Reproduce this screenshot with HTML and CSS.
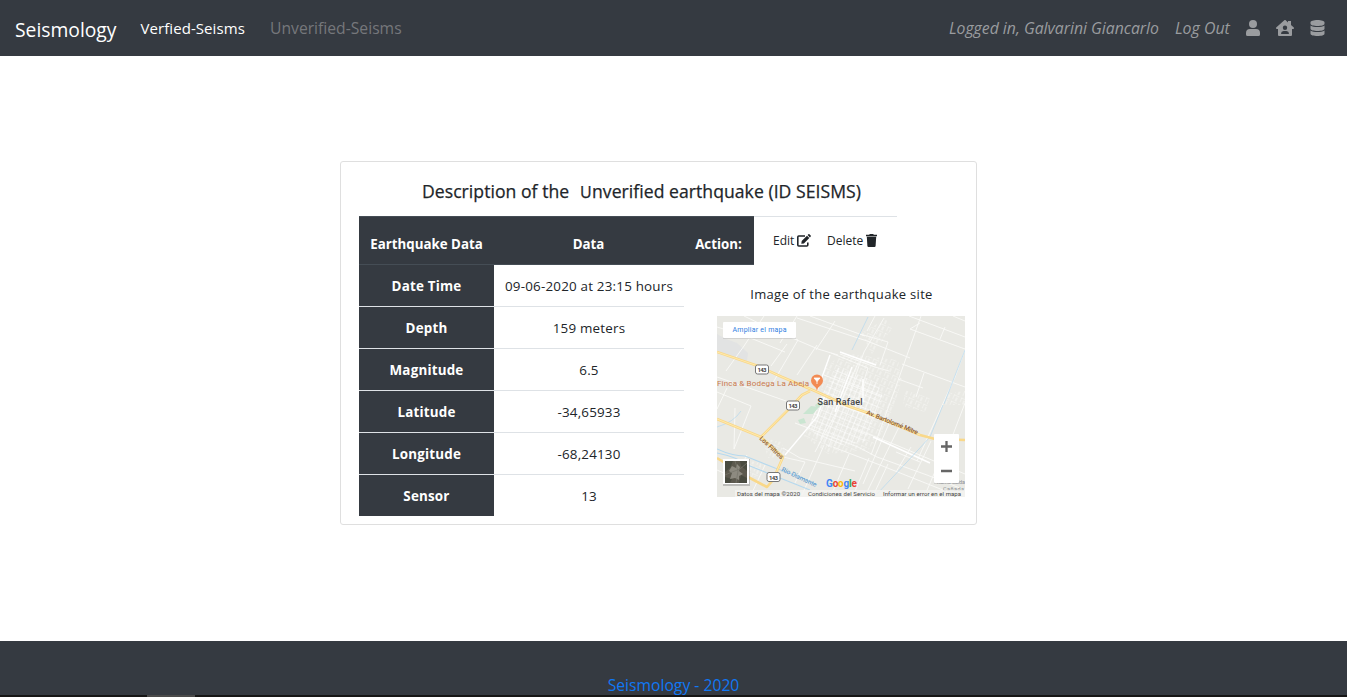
FILE: index.html
```html
<!DOCTYPE html>
<html lang="en">
<head>
<meta charset="utf-8">
<title>Seismology</title>
<link rel="stylesheet" href="styles.css">
</head>
<body>
<nav class="navbar">
  <a class="brand">Seismology</a>
  <a class="nav-link active">Verfied-Seisms</a>
  <a class="nav-link muted">Unverified-Seisms</a>
  <div class="session">
    <em class="user">Logged in, Galvarini Giancarlo</em>
    <em class="logout">Log Out</em>
    <svg class="icon-user" viewBox="0 0 14 16"><circle cx="7" cy="4" r="4"/><path d="M4 9h6a4 4 0 0 1 4 4v1.500a1.500 1.500 0 0 1-1.500 1.500h-11A1.500 1.500 0 0 1 0 14.500V13a4 4 0 0 1 4-4z"/></svg>
    <svg class="icon-house" viewBox="0 0 18 16"><path fill-rule="evenodd" d="M8.300.3a1 1 0 0 1 1.400 0L12 2.400V1h3v4.100l2.800 2.500c.5.500.1 1.400-.6 1.400H16v6a1 1 0 0 1-1 1H3a1 1 0 0 1-1-1V9H.8C.1 9-.3 8.100.2 7.600zM9 5.500a2.200 2.200 0 1 0 0 4.400 2.200 2.200 0 0 0 0-4.400zM7.600 11A2.600 2.600 0 0 0 5 13.500c0 .3.200.5.500.5h7c.3 0 .5-.2.5-.5a2.600 2.600 0 0 0-2.600-2.500z"/></svg>
    <svg class="icon-db" viewBox="0 0 14 16"><path d="M14 2.300v1.400C14 5 10.900 6 7 6S0 5 0 3.700V2.300C0 1 3.100 0 7 0s7 1 7 2.300zM14 5.500v3.200C14 10 10.900 11 7 11s-7-1-7-2.300V5.500C1.500 6.500 4.300 7 7 7s5.500-.5 7-1.500zm0 5v3.200C14 15 10.900 16 7 16s-7-1-7-2.300v-3.200C1.500 11.500 4.300 12 7 12s5.500-.5 7-1.500z"/></svg>
  </div>
</nav>
<main class="content">
  <section class="card">
    <h1 class="title"><span class="t1">Description of the</span><span class="t2">U</span><span class="t3">nverified earthquake (ID SEISMS)</span></h1>
    <div class="head-row">
      <div class="head-cells"><b class="h-name">Earthquake Data</b><b class="h-data">Data</b><b class="h-action">Action:</b></div>
      <div class="actions">
        <span class="edit">Edit</span>
        <svg class="icon-edit" viewBox="0 0 14 13"><path fill="none" stroke="#212529" stroke-width="1.600" d="M8 2H1.800Q.8 2 .8 3v8q0 1 1 1h8q1 0 1-1V8.500"/><path fill="#212529" d="M10 1.700 12.300 4 6.900 9.400 4.300 9.800 4.700 7.100zM10.600 1.100 11.400.3q.5-.5 1 0L13.700 1.600q.4.400 0 .9L12.900 3.400z"/></svg>
        <span class="delete">Delete</span>
        <svg class="icon-trash" viewBox="0 0 11 13"><path fill="#212529" d="M0 .8h3.200L3.800 0h3.400l.6.8H11v1.500H0zM.8 2.800h9.400l-.6 9.200q-.1 1-1.100 1h-6q-1 0-1.100-1z"/></svg>
      </div>
    </div>
    <div class="details">
      <dl class="data">
        <dt>Date Time</dt><dd class="date">09-06-2020 at 23:15 hours</dd>
        <dt>Depth</dt><dd>159 meters</dd>
        <dt>Magnitude</dt><dd>6.5</dd>
        <dt>Latitude</dt><dd>-34,65933</dd>
        <dt>Longitude</dt><dd>-68,24130</dd>
        <dt>Sensor</dt><dd>13</dd>
      </dl>
      <figure class="site">
        <figcaption>Image of the earthquake site</figcaption>
        <svg class="map" viewBox="717 316 248 181">
          <defs>
            <pattern id="blocks" width="5" height="6" patternUnits="userSpaceOnUse" patternTransform="rotate(22)"><path d="M0 0H5M0 0V6" stroke="#fff" stroke-width="1.100" fill="none"/></pattern>
            <pattern id="suburb" width="8" height="7" patternUnits="userSpaceOnUse" patternTransform="rotate(24)"><path d="M0 0H6M0 0V5M4 2v4" stroke="#fafaf8" stroke-width=".8" fill="none"/></pattern>
          </defs>
          <rect x="717" y="316" width="248" height="181" fill="#e9e9e4"/>
          <path fill="#e2e3e3" d="M717 334l9 5 11 4 11 10-1 8-14-4-16-6z"/>
          <path fill="url(#suburb)" d="M838 358l12-4 48 6 4 20-16 50-18 20-40 4-24-18 14-30 8-40zM762 438l20 4 4 14-18 2zM735 458l26 5 2 13-17 2zM905 390l25 8-5 14-22-6zM948 393l17-2v14h-20zM861 333l25-14 6 10-20 25z"/>
          <path fill="url(#blocks)" d="M837 367l40 15 6 15-18 45-37 5-20-20 12-28z"/>
          <g fill="none" stroke="#f9f9f7" stroke-width=".9">
            <path d="M744 316l27 13 47 20 20 6M717 327l26 8 42 17M764 316l-20 30-18 25M787 344l-16 22M771 329l27 11-27 46M817 345l-20 30M835 321l-19 29M717 377l32 11 37 13M727 388l-10 21M717 392l34 14-17 43M797 316l-17 27M797 318l70 23 43 17M810 316l55 20M860 334l28 8-8 23M884 318l-20 34-14 39M921 316l-26 73-24 66M909 316l56 21M920 323l-10 6 55 20M945 327l-5 12M965 350l-10 27-38 84M902 364l63 23M924 373l-8 24M898 379l25 9M953 316l12 5M875 316l-8 15"/>
            <path d="M840 354l35 13 14 4M831 353l37 15-13 40M858 363l-20 46-23 43M824 375l58 22M817 398l60 20M795 423l63 24 19 10 50 18 38 15M783 448l17 10 55 13M900 425l-33 67M891 419l-28 65M931 441l-23 48M948 441l-23 54M853 428l43 17 69 29M833 447l47 18 68 27M824 445l-22 50M849 454l-18 42M869 458l-16 38M888 464l-15 32M965 403l-30 79M911 447l-15 25M896 452l24 10M783 457l22 5-10 21M735 408l-1 41M717 470l18 8M747 455l-15 28M765 465l-14 30"/>
          </g>
          <g fill="none" stroke="#fff" stroke-width="1.400"><path d="M840 352l36 13M852 367l-17 45M863 379v23M785 455l32-38 8-22M817 391l13-36M873 437l11 5 46 21"/></g>
          <g fill="none" stroke="#b5d9ef" stroke-width="1.100"><path d="M717 449q15 7 28 7l30 12 25 9 17 8M717 453q20 4 33 13l30 12 30 12"/><path stroke-width=".7" d="M717 427q17-5 24-16M868 317l-16 33M965 350l-21 54M943 405l-13 32-24 26-29 31"/></g>
          <path fill="#cae5d1" d="M803 414l8-8 8 1-6 7zM798 420l6-2 2 5-6 1zM815 405l6-4 3 3-7 4z"/>
          <g fill="none" stroke="#f9d889" stroke-width="2.600" stroke-linejoin="round"><path d="M717 352l41 14 24 11 33 14 33 15 20 7 52 22 15 4 30 1M810 391l-8 4-12 13-29 29-44-18M761 437l22 20-10 23-6 7-19-10-31-19"/></g>
          <g fill="none" stroke="#ffe9ae" stroke-width="1"><path d="M717 352l41 14 24 11 33 14 33 15 20 7 52 22M810 391l-8 4-41 42-44-18M761 437l22 20-10 23"/></g>
          <g fill="#fff" stroke="#777" stroke-width="1"><rect x="755.500" y="365" width="13" height="9" rx="2"/><rect x="786.500" y="401" width="13" height="9" rx="2"/><rect x="767" y="472.500" width="13" height="9" rx="2"/></g>
          <g class="shield-text"><text x="757.500" y="372.300" textLength="9">143</text><text x="788.500" y="408.300" textLength="9">143</text><text x="769" y="479.800" textLength="9">143</text></g>
          <path fill="#f28b54" d="M817 391q-.8-4-4-6a6 6 0 1 1 8 0q-3.200 2-4 6z"/><path d="M814 378h6l-3 3.500zM817 381v3" fill="#fff" stroke="#fff" stroke-width=".8"/>
          <text class="poi" x="717" y="385.500" textLength="92">Finca &amp; Bodega La Abeja</text>
          <text class="city" x="817.500" y="404.500" textLength="45">San Rafael</text>
          <text class="road" transform="translate(866 414) rotate(22)" textLength="55">Av. Bartolomé Mitre</text>
          <text class="road" transform="translate(759 439) rotate(43)" textLength="30">Los Filtros</text>
          <text class="river" transform="translate(781 471) rotate(25)" textLength="38">Río Diamante</text>
          <g class="place"><text x="937" y="483.500" textLength="28">Rama Caída</text><text x="943" y="490.500" textLength="21">Cañada</text></g>
          <rect x="735" y="490" width="230" height="7" fill="#f4f4f2" fill-opacity=".82"/>
          <text class="google" x="826" y="486.500" textLength="31"><tspan fill="#4285f4">G</tspan><tspan fill="#ea4335">o</tspan><tspan fill="#fbbc05">o</tspan><tspan fill="#4285f4">g</tspan><tspan fill="#34a853">l</tspan><tspan fill="#ea4335">e</tspan></text>
          <g class="legal"><text x="737" y="495.500" textLength="63">Datos del mapa ©2020</text><text x="808" y="495.500" textLength="67">Condiciones del Servicio</text><text x="883" y="495.500" textLength="78">Informar un error en el mapa</text></g>
          <rect x="723" y="323" width="73" height="16" fill="#bbb" opacity=".5"/><rect x="723" y="322" width="73" height="16" rx="1" fill="#fff"/>
          <text class="enlarge" x="732.500" y="332" textLength="54">Ampliar el mapa</text>
          <rect x="723" y="459" width="27" height="27" fill="#777" opacity=".4"/><rect x="723" y="459" width="26" height="25" fill="#fff"/><rect x="725" y="461" width="22" height="22" fill="#5c594e"/>
          <path fill="#494b40" d="M725 461h8l-3 7-5 4zM740 461h7v10l-6-5zM725 477l7 2-2 4h-5zM741 475l6 3v5h-8z"/><path fill="#8d8a80" d="M732 466l4 2 1-4 3 3-1 4 4 3-4 2v4l-4-2-5 1 2-6-3-2z"/><path fill="none" stroke="#77756b" stroke-width=".7" d="M725 475l7-3 8-3 7-6M735 461l3 10-2 12"/>
          <rect x="934" y="435" width="25" height="49" fill="#aaa" opacity=".4"/><rect x="934" y="434" width="25" height="49" rx="1" fill="#fff"/><path d="M941 446.500h11M946.500 441v11M941 471h11" stroke="#666" stroke-width="2.300"/>
        </svg>
      </figure>
    </div>
  </section>
</main>
<footer class="footer"><a class="copyright">Seismology - 2020</a><div class="edge"><div class="edge-tab"></div></div></footer>
</body>
</html>
```
FILE: styles.css
```css
* { box-sizing: border-box; }
body { margin: 0; height: 697px; overflow: hidden; display: flex; flex-direction: column; background: #fff; color: #212529; font-family: "Open Sans", "Noto Sans", sans-serif; font-size: 15px; white-space: nowrap; }
.navbar { height: 56px; flex: none; display: flex; align-items: center; padding: 0 22px 0 15px; background: #353a41; color: #9a9c9f; }
.brand { width: 125.500px; color: #fff; font-size: 19.300px; padding-top: 2px; }
.nav-link { color: #fff; }
.nav-link.active { width: 129.500px; letter-spacing: .07px; }
.nav-link.muted { color: #75777b; font-size: 15.700px; }
.session { margin-left: auto; display: flex; align-items: center; }
.user { width: 226px; font-size: 15.780px; }
.logout { width: 71px; font-size: 15.900px; }
.session svg { fill: #9a9c9f; height: 16px; }
.icon-user { width: 14px; margin-right: 16px; }
.icon-house { width: 18px; margin-right: 16px; }
.icon-db { width: 15px; }
.content { flex: 1; padding: 105px 0 0 340px; }
.card { width: 637px; height: 364px; border: 1px solid #dfdfdf; border-radius: 3px; padding-left: 18px; }
.title { height: 54px; margin: 0; padding: 17px 0 0 63px; display: flex; line-height: 24px; font-size: 17.600px; font-weight: 500; letter-spacing: .04px; -webkit-text-stroke: .25px #212529; }
.t1 { width: 158px; }
.t2 { width: 12px; font-size: 16px; padding-top: 1px; }
.head-row { width: 538px; height: 49px; display: flex; border-top: 1px solid #dee2e6; font-size: 13.300px; }
.head-cells { width: 395px; height: 49px; margin-top: -1px; padding-top: 7px; display: grid; grid-template-columns: 135px 189px 71px; align-items: center; text-align: center; background: #353a41; border-top: 1px solid #454d55; border-bottom: 1px solid #454d55; color: #fff; }
.actions { display: flex; align-items: center; padding: 0 0 1px 19px; font-size: 12px; }
.edit { width: 24px; }
.icon-edit { width: 14px; height: 13px; margin-right: 16px; }
.delete { width: 39px; }
.icon-trash { width: 11px; height: 13px; }
.details { display: flex; }
.data { width: 325px; height: 251px; margin: 0; display: grid; grid-template-columns: 135px 190px; grid-template-rows: repeat(5, 42px) 41px; text-align: center; font-size: 13.400px; line-height: 42px; letter-spacing: .2px; }
.data dt { background: #353a41; color: #fff; font-weight: 700; border-bottom: 1px solid #dee2e6; }
.data dd { margin: 0; border-bottom: 1px solid #dee2e6; }
.data dt:last-of-type, .data dd:last-of-type { border-bottom: 0; }
.site { margin: 0 0 0 33px; width: 248px; text-align: center; }
.site figcaption { height: 51px; padding: 19px 0 0 1px; line-height: 20px; font-size: 13px; letter-spacing: .3px; }
.map { width: 248px; height: 181px; display: block; font-family: Roboto, sans-serif; }
.shield-text { font-size: 6px; fill: #444; font-weight: 700; }
.poi { font-size: 8px; fill: #c9794f; }
.city { font-size: 9px; fill: #444; font-weight: 500; }
.road { font-size: 6.500px; fill: #8a5c36; font-weight: 500; }
.river { font-size: 6.500px; fill: #5290c8; }
.place { font-size: 5.500px; fill: #8c8f94; }
.google { font-size: 10px; font-weight: 700; }
.legal { font-size: 6px; fill: #444; }
.enlarge { font-size: 7px; fill: #2f80df; }
.footer { height: 56px; flex: none; display: flex; flex-direction: column; align-items: center; background: #353a41; }
.copyright { height: 54px; padding-top: 34px; line-height: 20px; color: #1078f5; font-size: 15.700px; }
.edge { height: 2px; width: 100%; background: #161616; padding-left: 147px; }
.edge-tab { width: 48px; height: 2px; background: #4a4a4a; }
```
